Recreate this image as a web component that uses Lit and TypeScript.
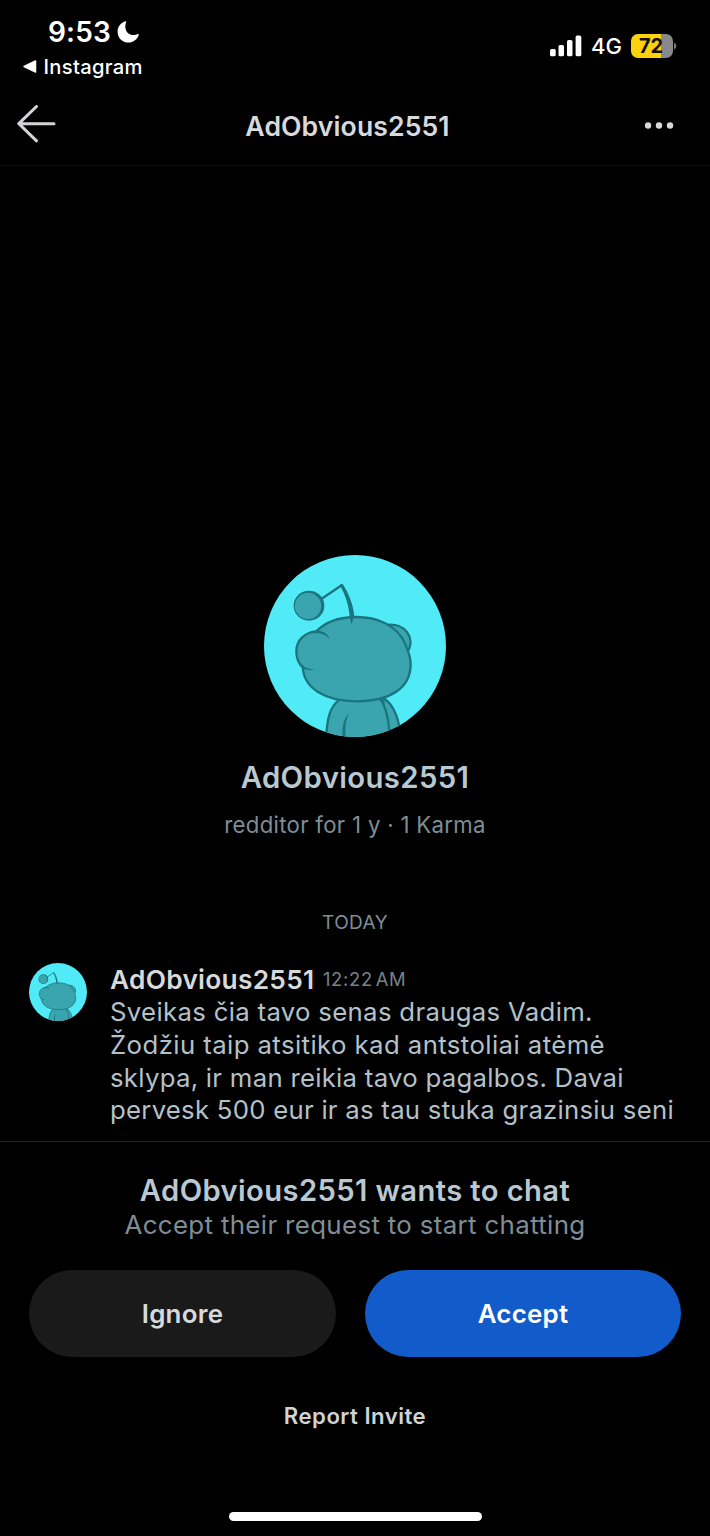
import { LitElement, html, css } from "lit";
import { customElement, property } from "lit/decorators.js";

@customElement("snoo-avatar")
class SnooAvatar extends LitElement {
  static styles = css`
    :host { display: block; border-radius: 50%; overflow: hidden; background: #51ebf7; }
    .art { display: block; width: 100%; height: 100%; }
    .shape { fill: #3aa5af; stroke: #1b757e; stroke-width: 7; stroke-linecap: round; stroke-linejoin: round; }
    .line { fill: none; stroke: #1b757e; stroke-width: 7; stroke-linecap: round; stroke-linejoin: round; }
    .fill { fill: #3aa5af; }
    .ink { fill: #1b757e; }
  `;
  render() {
    return html`<svg class="art" viewBox="42 30 546 546">
      <path class="shape" d="M400 458 C425 475 444 510 450 560 L440 600 L400 600 Z"/>
      <path class="shape" d="M268 464 C240 485 229 520 228 600 L418 600 C420 540 412 490 388 458 Z"/>
      <path class="ink" d="M297 504 C278 525 276 550 278 580 L288 580 C284 550 286 530 297 504 Z"/>
      <path class="shape" d="M412 240 C462 232 500 280 472 320 Z"/>
      <path class="fill" d="M158 364 C160 430 225 469 320 469 C420 469 482 430 482 358 C482 330 470 310 465 295 C440 240 380 216 320 216 C270 216 225 232 198 260 C165 260 140 285 139 318 C139 340 145 355 158 364 Z"/>
      <path class="line" d="M158 364 C160 430 225 469 320 469 C420 469 482 430 482 358 C482 330 472 315 465 295 C440 240 380 216 320 216 C270 216 225 232 198 260"/>
      <path class="line" d="M158 366 C145 355 139 340 139 318 C140 285 165 262 198 260"/>
      <path class="ink" d="M180 259 C205 253 232 259 239 283 C228 268 210 263 188 265 Z"/>
      <path class="ink" d="M148 352 C160 368 175 373 194 373 C175 379 158 374 148 360 Z"/>
      <path class="line" d="M214 162 L275 121"/>
      <path class="ink" d="M270 119 L278 117 C296 145 310 178 313 214 L304 238 L299 214 C296 180 286 150 271 124 Z"/>
      <ellipse class="ink" cx="177" cy="182" rx="46" ry="45"/>
      <circle class="fill" cx="174" cy="183" r="39.5"/>
    </svg>`;
  }
}

@customElement("status-bar")
class StatusBar extends LitElement {
  static styles = css`
    :host { display: flex; justify-content: space-between; height: 86px; padding: 16px 33px 0 23px; box-sizing: border-box; color: #fff; }
    .left { display: flex; flex-direction: column; }
    .clock { display: flex; align-items: center; gap: 6px; height: 32px; padding-left: 25px; font-size: 28px; font-weight: 600; letter-spacing: 0.2px; }
    .back { display: flex; align-items: center; gap: 7px; height: 40px; font-size: 20.200px; font-weight: 500; letter-spacing: 0.300px; }
    .app { padding-top: 1px; }
    .right { display: flex; align-items: center; height: 59px; }
    .net { font-size: 22px; font-weight: 500; margin: 0 9px 0 9px; }
    .battery { display: flex; align-items: center; justify-content: center; width: 42px; height: 24px; border-radius: 7px; box-sizing: border-box; padding-right: 2px; background: linear-gradient(90deg, #fcd10e 30px, #89888d 30px); color: #141005; font-size: 20px; font-weight: 700; }
    svg { display: block; }
  `;
  render() {
    return html`
      <div class="left">
        <div class="clock"><span class="time">9:53</span>
          <svg width="22" height="22" viewBox="0 0 22 22"><path fill="#fff" d="M8.6 0.3 C4 1.6 0.6 5.6 0.6 10.7 C0.6 17 5.4 21.6 11.4 21.6 C16.3 21.6 20.5 18.3 21.8 13.8 C22 13.1 21.4 12.9 20.9 13.1 C19.6 13.8 18.3 14 16.9 14 C11.8 14 8.3 10.6 8.3 5.4 C8.3 3.9 8.6 2.5 9.1 1.3 C9.4 0.7 9.2 0.2 8.6 0.3 Z"/></svg>
        </div>
        <div class="back"><svg width="13.500" height="13" viewBox="0 0 13 13"><path fill="#fff" d="M0.5 5.8 L12 0.3 Q13 0 13 1 V12 Q13 13 12 12.7 L0.5 7.2 Q-0.3 6.5 0.5 5.8 Z"/></svg><span class="app">Instagram</span></div>
      </div>
      <div class="right">
        <svg width="32" height="22" viewBox="0 0 32 22" fill="#fff"><rect x="0" y="14" width="5.7" height="7.3" rx="1.600"/><rect x="8.500" y="10" width="5.500" height="11.300" rx="1.600"/><rect x="17" y="5" width="5.500" height="16.300" rx="1.600"/><rect x="25.600" y="0.600" width="5.700" height="20.700" rx="1.600"/></svg>
        <span class="net">4G</span>
        <span class="battery">72</span>
        <svg width="4" height="8" viewBox="0 0 4 8"><path fill="#77767b" d="M1 0.5 Q3.5 1.5 3.5 4 T1 7.5 Z"/></svg>
      </div>`;
  }
}

@customElement("chat-header")
class ChatHeader extends LitElement {
  @property() name = "";
  static styles = css`
    :host { display: grid; grid-template-columns: 60px 1fr 60px; align-items: center; height: 80px; box-sizing: border-box; padding: 0 29px 0 14px; border-bottom: 1px solid #0e0f10; color: #d7d9dc; }
    .title { text-align: center; font-size: 26.600px; font-weight: 600; line-height: 80px; letter-spacing: 0.100px; }
    svg { display: block; }
    .back { margin-bottom: 2px; }
    .more { justify-self: end; }
  `;
  render() {
    return html`
      <svg class="back" width="44" height="40" viewBox="0 0 44 40" fill="none" stroke="#d3d3d5" stroke-width="3" stroke-linecap="round" stroke-linejoin="round"><path d="M22.500 1.500 L4.800 18.700 L22.500 35.800 M4.800 18.700 H40"/></svg>
      <span class="title">${this.name}</span>
      <svg class="more" width="36" height="8" viewBox="0 0 36 8" fill="#d7d7d9"><circle cx="3" cy="3.500" r="3.200"/><circle cx="14" cy="3.500" r="3.200"/><circle cx="25" cy="3.500" r="3.200"/></svg>`;
  }
}

const MESSAGE = [
  { text: "Sveikas čia tavo senas draugas Vadim.", tracking: 0.31 },
  { text: "Žodžiu taip atsitiko kad antstoliai atėmė", tracking: 0.41 },
  { text: "sklypa, ir man reikia tavo pagalbos. Davai", tracking: 0.27 },
  { text: "pervesk 500 eur ir as tau stuka grazinsiu seni", tracking: 0.25 },
];

@customElement("app-root")
class AppRoot extends LitElement {
  static styles = css`
    :host { display: flex; flex-direction: column; width: 710px; height: 1536px; overflow: hidden; background: #000; font-family: Inter, "Liberation Sans", sans-serif; line-height: 1; white-space: nowrap; }
    .conversation { display: flex; flex-direction: column; justify-content: flex-end; height: 976px; box-sizing: border-box; padding: 0 29px 14px; border-bottom: 1px solid #212325; }
    .profile { display: flex; flex-direction: column; align-items: center; }
    .big { width: 182px; height: 182px; }
    .name { margin-top: 21px; line-height: 40px; font-size: 29.300px; font-weight: 600; letter-spacing: 0.380px; color: #b9c8d1; }
    .meta { margin-top: 11px; line-height: 31px; font-size: 22.200px; letter-spacing: 0.300px; color: #7f8e96; }
    .day { margin-top: 68px; line-height: 30px; text-align: center; font-size: 19px; letter-spacing: 0.400px; color: #7f8e96; }
    .message { display: flex; gap: 23px; margin-top: 25px; }
    .small { width: 58px; height: 58px; }
    .head { display: flex; align-items: center; gap: 8.500px; height: 33px; }
    .author { font-size: 26.300px; font-weight: 600; letter-spacing: 0.280px; color: #d7dadc; }
    .time { font-size: 18.400px; letter-spacing: 0.700px; word-spacing: -3px; color: #77838a; }
    .line { line-height: 32.700px; font-size: 25.750px; color: #b4c1c9; }
    .request { display: flex; flex-direction: column; align-items: center; padding: 30px 29px 0; }
    .want { line-height: 37px; font-size: 29.200px; font-weight: 600; letter-spacing: 0.390px; color: #b9c8d1; }
    .hint { line-height: 32px; font-size: 25.900px; letter-spacing: 0.330px; color: #7f8e96; }
    .actions { display: grid; grid-template-columns: 307px 316px; gap: 29px; margin-top: 29px; }
    .btn { display: block; height: 87px; padding: 0; border: 0; border-radius: 44px; font: 600 25.900px/88px Inter, "Liberation Sans", sans-serif; letter-spacing: 0.250px; color: #d7dadc; background: #1a1a1b; }
    .primary { background: #115bca; color: #fff; }
    .report { margin-top: 43px; line-height: 32px; font-size: 22.200px; font-weight: 600; letter-spacing: 0.470px; color: #d0d3d6; }
    .home { width: 253px; height: 9px; margin-top: 80px; border-radius: 5px; background: #fff; }
  `;
  render() {
    const name = "AdObvious2551";
    return html`
      <status-bar></status-bar>
      <chat-header name=${name}></chat-header>
      <main class="conversation">
        <section class="profile">
          <snoo-avatar class="big"></snoo-avatar>
          <div class="name">${name}</div>
          <div class="meta">redditor for 1 y · 1 Karma</div>
        </section>
        <div class="day">TODAY</div>
        <article class="message">
          <snoo-avatar class="small"></snoo-avatar>
          <div class="body">
            <div class="head"><span class="author">${name}</span><span class="time">12:22 AM</span></div>
            ${MESSAGE.map((l) => html`<div class="line" style="letter-spacing:${l.tracking}px">${l.text}</div>`)}
          </div>
        </article>
      </main>
      <section class="request">
        <div class="want">${name} wants to chat</div>
        <div class="hint">Accept their request to start chatting</div>
        <div class="actions"><button class="btn">Ignore</button><button class="btn primary">Accept</button></div>
        <div class="report">Report Invite</div>
        <div class="home"></div>
      </section>`;
  }
}
